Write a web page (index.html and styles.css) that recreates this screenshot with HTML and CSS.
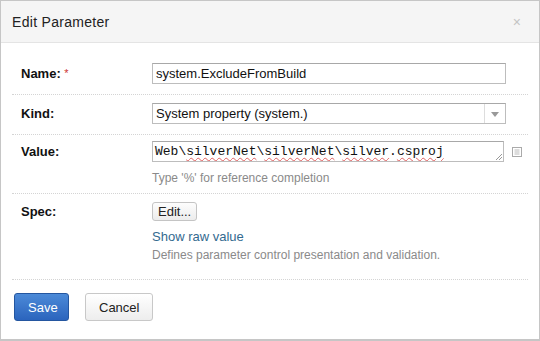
FILE: index.html
```html
<!DOCTYPE html>
<html lang="en">
<head>
  <meta charset="UTF-8" />
  <title>Edit Parameter</title>
  <link rel="stylesheet" href="styles.css">
</head>
<body>
  <div class="dialog">
    <div class="dialog-header">
      <span class="dialog-title">Edit Parameter</span>
      <span class="close">&times;</span>
    </div>

    <form class="dialog-body">
      <div class="row row-first">
        <label class="row-label">Name: <span class="req">*</span></label>
        <div class="row-field">
          <div class="input">system.ExcludeFromBuild</div>
        </div>
      </div>

      <div class="row">
        <label class="row-label">Kind:</label>
        <div class="row-field">
          <div class="select">
            <span class="select-text">System property (system.)</span>
            <span class="select-arrow"></span>
          </div>
        </div>
      </div>

      <div class="row row-value">
        <label class="row-label">Value:</label>
        <div class="row-field">
          <div class="value-line">
            <div class="textarea">Web\<span class="typo">silverNet</span>\<span class="typo">silverNet</span>\<span class="typo">silver</span>.<span class="typo">csproj</span>
              <svg class="grip" width="7" height="7" viewBox="0 0 7 7"><path d="M1 7 L7 1 M4 7 L7 4" stroke="#999" stroke-width="1"/></svg>
            </div>
            <svg class="expand" width="10" height="10" viewBox="0 0 10 10"><rect x="0.5" y="0.5" width="9" height="9" fill="#fff" stroke="#aaa"/><path d="M2.5 3h5M2.5 5h5M2.5 7h5" stroke="#bbb"/></svg>
          </div>
          <div class="hint">Type '%' for reference completion</div>
        </div>
      </div>

      <div class="row row-spec">
        <label class="row-label">Spec:</label>
        <div class="row-field">
          <button type="button" class="btn-small">Edit...</button>
          <a class="link">Show raw value</a>
          <div class="hint">Defines parameter control presentation and validation.</div>
        </div>
      </div>

      <div class="dialog-footer">
        <button type="button" class="btn btn-primary">Save</button>
        <button type="button" class="btn">Cancel</button>
      </div>
    </form>
  </div>
</body>
</html>
```

FILE: styles.css
```css
body {
  margin: 0;
  font-family: 'Liberation Sans', Arial, sans-serif;
  font-size: 13px;
  color: #333;
  background-color: #fff;
}

.dialog {
  width: 540px;
  height: 341px;
  box-sizing: border-box;
  border: 1px solid #c6c6c6;
  border-bottom-width: 2px;
  background-color: #fff;
}

.dialog-header {
  height: 41px;
  background-color: #f5f5f5;
  border-bottom: 1px solid #e4e4e4;
  display: flex;
  align-items: center;
  justify-content: space-between;
  padding: 0 18px 0 11px;
}

.dialog-title {
  font-size: 14px;
  color: #222;
  letter-spacing: 0.3px;
  padding-top: 1px;
}

.close {
  color: #c4c4c4;
  font-size: 14px;
}

.dialog-body {
  padding: 0 11px;
}

.row {
  display: flex;
  padding: 8px 0 10px;
  border-bottom: 1px dotted #d4d4d4;
}

.row-first {
  padding-top: 20px;
}

.row-label {
  width: 131px;
  padding-left: 9px;
  flex-shrink: 0;
  font-weight: bold;
  color: #111;
  line-height: 21px;
}

.req {
  color: #c33;
  font-weight: normal;
  font-size: 11px;
  vertical-align: top;
}

.row-field {
  flex: 1;
}

.input,
.select,
.textarea {
  box-sizing: border-box;
  height: 21px;
  width: 354px;
  border: 1px solid #bdbdbd;
  border-top-color: #a8a8a8;
  line-height: 19px;
  padding: 0 3px;
  color: #111;
  background-color: #fff;
}

.select {
  display: flex;
  padding-right: 0;
}

.select-text {
  flex: 1;
}

.select-arrow {
  width: 20px;
  border-left: 1px solid #ddd;
  position: relative;
}

.select-arrow::after {
  content: "";
  position: absolute;
  left: 6px;
  top: 8px;
  border-left: 4px solid transparent;
  border-right: 4px solid transparent;
  border-top: 5px solid #999;
}

.row-value {
  padding-top: 6px;
  padding-bottom: 8px;
}

.value-line {
  display: flex;
  align-items: center;
  gap: 8px;
}

.textarea {
  width: 352px;
  position: relative;
  font-family: 'Liberation Mono', 'Courier New', monospace;
  font-size: 13px;
  padding-left: 2px;
  white-space: nowrap;
  overflow: hidden;
}

.typo {
  text-decoration: underline wavy #e06060;
  text-decoration-thickness: 1px;
  text-underline-offset: 2px;
}

.grip {
  position: absolute;
  right: 1px;
  bottom: 1px;
}

.expand {
  margin-top: 1px;
}

.hint {
  color: #8a8a8a;
  font-size: 12px;
  margin-top: 9px;
}

.row-spec {
  padding-top: 8px;
  padding-bottom: 17px;
}

.row-spec .row-label {
  line-height: 20px;
}

.btn-small {
  display: block;
  font-family: inherit;
  font-size: 13px;
  color: #222;
  height: 19px;
  padding: 0 5px;
  border: 1px solid #c4c4c4;
  border-radius: 3px;
  background: linear-gradient(#fdfdfd, #ececec);
}

.link {
  display: block;
  color: #336a8f;
  margin-top: 8px;
}

.row-spec .hint {
  margin-top: 4px;
}

.dialog-footer {
  display: flex;
  gap: 16px;
  padding: 13px 0 0 2px;
}

.btn {
  height: 28px;
  padding: 0 13px;
  font-family: inherit;
  font-size: 13px;
  color: #222;
  border: 1px solid #c8c8c8;
  border-radius: 3px;
  background: linear-gradient(#ffffff, #ededed);
}

.btn-primary {
  width: 55px;
  color: #fff;
  border-color: #2456a0;
  background: linear-gradient(#4c8ad8, #2b64bd);
}
```
